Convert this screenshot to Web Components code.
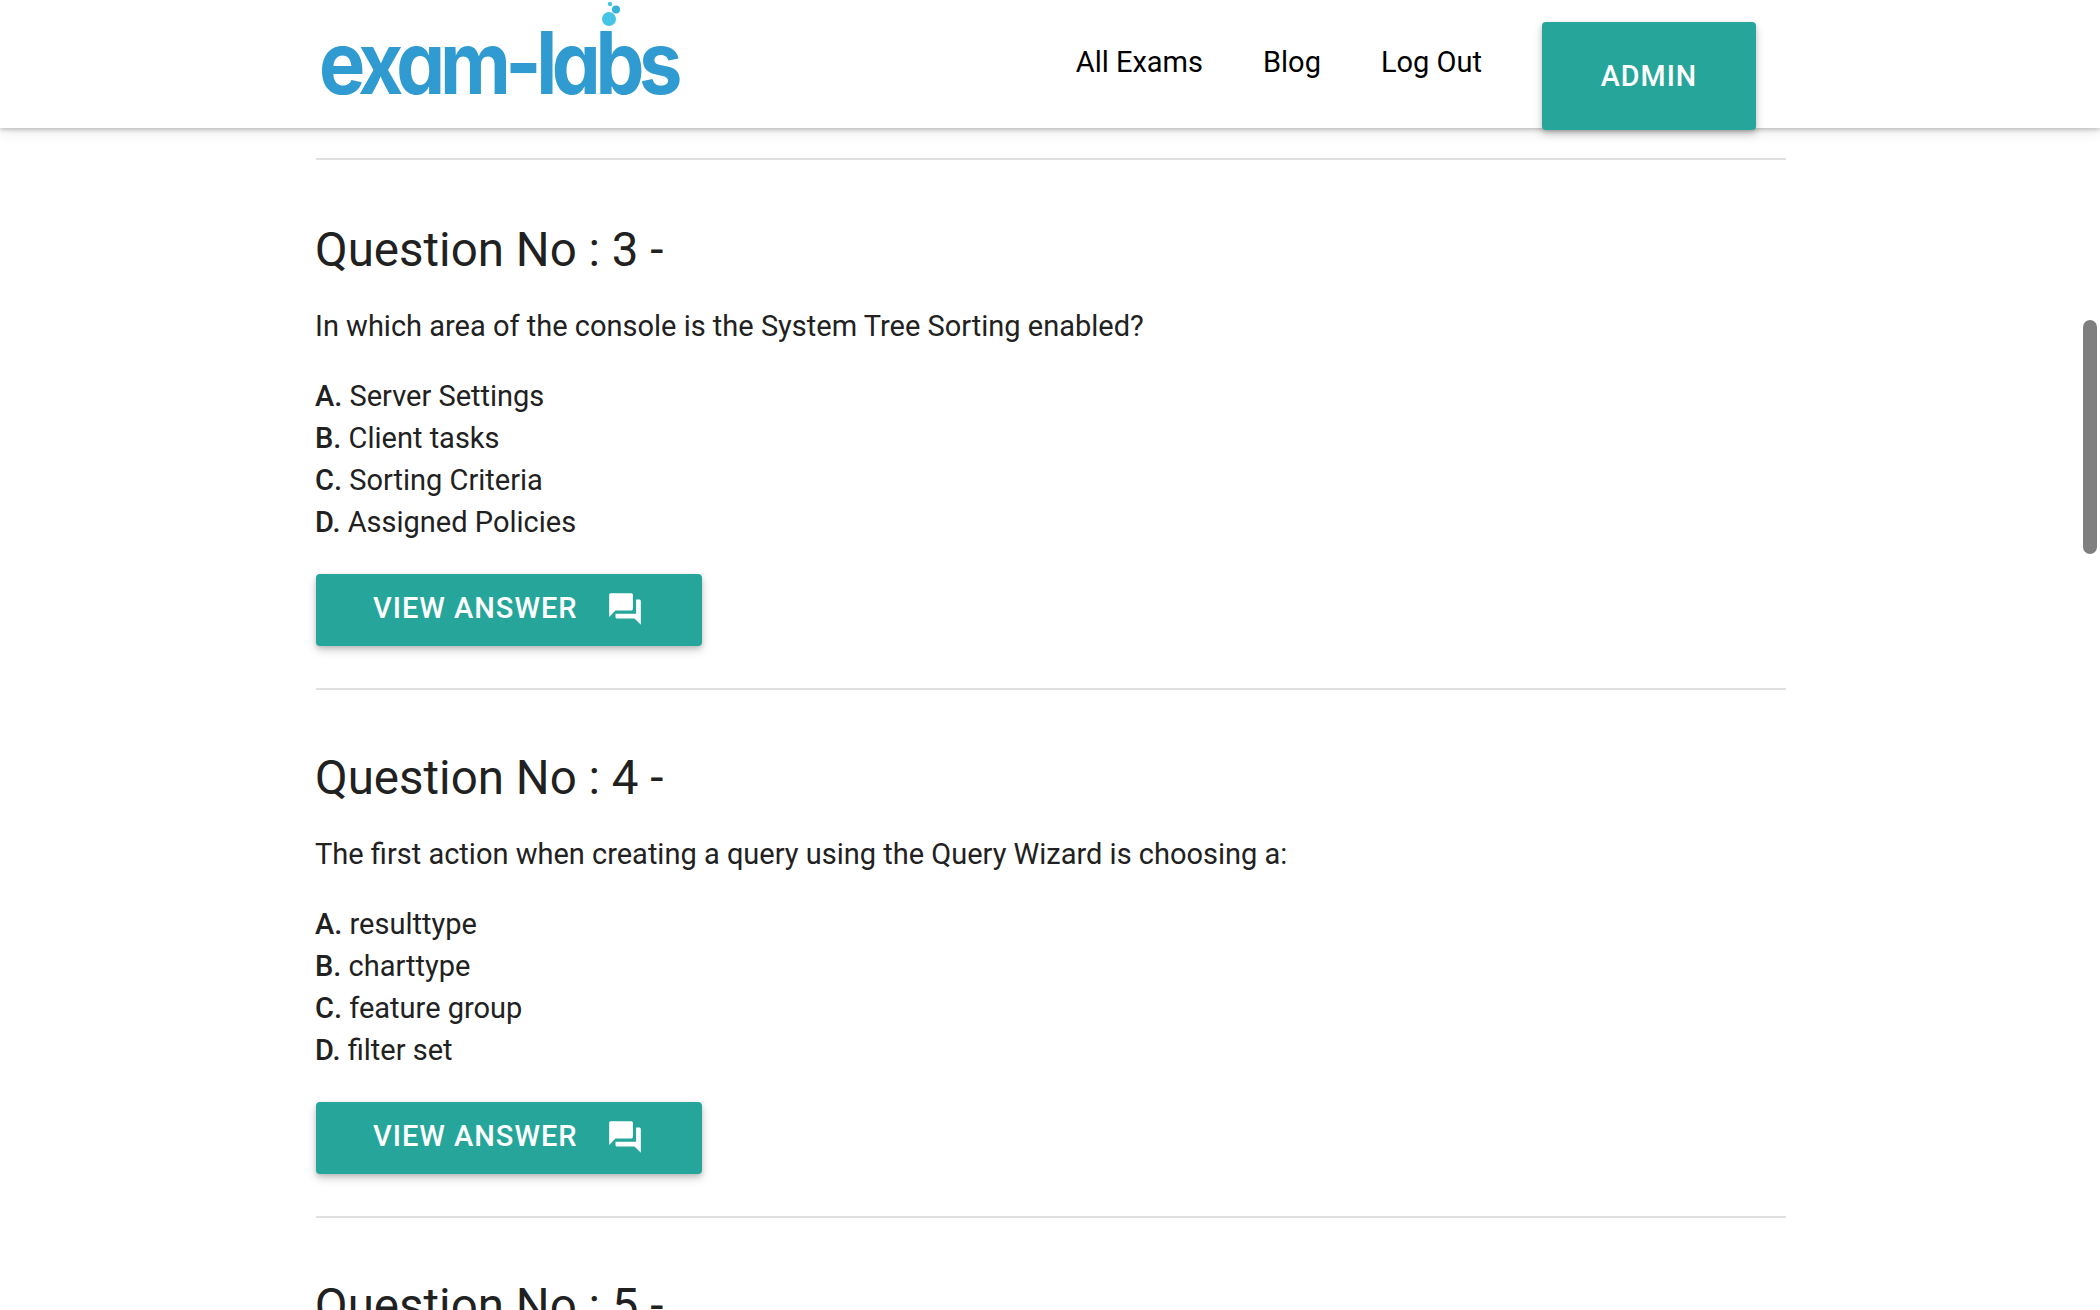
<!DOCTYPE html>
<html lang="en">
<head>
<meta charset="utf-8">
<title>Exam Labs</title>
<style>
html,body{margin:0;padding:0;height:1310px;overflow:hidden;background:#fff}
body{font-family:Roboto,"Liberation Sans",sans-serif;color:#212121}
</style>
</head>
<body>
<template id="t-logo">
<style>
:host{display:block;width:380px;height:128px}
svg{display:block;width:380px;height:128px;overflow:visible}
text{font-family:Inter,"Liberation Sans",sans-serif;font-weight:700;font-size:86px;letter-spacing:-6px;fill:#2f9bd0;font-feature-settings:"cv11" 1;filter:blur(.5px)}
</style>
<svg viewBox="0 0 380 128" role="img" aria-label="exam-labs">
<text x="0" y="94" textLength="358" lengthAdjust="spacingAndGlyphs">exam-labs</text>
<circle cx="290" cy="19" r="7" fill="#45c4e6"/>
<circle cx="297" cy="9.5" r="4" fill="#35b2d8"/>
<circle cx="291" cy="4" r="2.2" fill="#45c4e6"/>
</svg>
</template>

<template id="t-header">
<style>
:host{display:flex;height:128px;background:#fff;box-shadow:0 2px 4px rgba(0,0,0,.2),0 3px 14px rgba(0,0,0,.1);position:relative;z-index:2;padding-left:319px;box-sizing:border-box}
nav{display:flex;margin-left:auto;margin-right:344px;align-items:flex-start}
::slotted(nav-link){margin-right:60px}
</style>
<slot name="logo"></slot>
<nav><slot></slot></nav>
</template>

<template id="t-navlink">
<style>
:host{display:block;font-size:29px;line-height:42px;color:#000;padding-top:41px;white-space:nowrap}
</style>
<slot></slot>
</template>

<template id="t-btn">
<style>
:host{display:inline-flex;align-items:center;justify-content:var(--btn-justify,center);padding-left:var(--btn-pad,0);background:#26a69a;color:#fff;border-radius:4px;box-sizing:border-box;font-size:var(--btn-font,29px);letter-spacing:1px;text-transform:uppercase;font-weight:500;box-shadow:0 4px 10px rgba(0,0,0,.2),0 2px 4px rgba(0,0,0,.12);white-space:nowrap}
</style>
<slot></slot>
</template>

<template id="t-question">
<style>
:host{display:block;border-top:2px solid #e0e0e0;padding:58px 0 0;box-sizing:border-box;height:528px}
:host(:first-child){padding-top:60px;height:530px}
h5{font-size:47.5px;font-weight:400;line-height:60px;margin:0 0 0 -1px;color:#212121}
p{font-size:29px;line-height:42px;margin:25px 0 28px -1px;color:#212121}
.opts{display:block;margin:0 0 31px -1px}
exam-button{width:386px;height:72px;--btn-justify:flex-start;--btn-pad:57px}
.lbl{display:block;margin-bottom:5px}
svg{width:38px;height:38px;fill:#fff;margin:0 0 2px 28px;display:block;flex:none}
</style>
<h5><slot name="title"></slot></h5>
<p><slot name="text"></slot></p>
<div class="opts"><slot></slot></div>
<exam-button><span class="lbl">View Answer</span><svg viewBox="0 0 24 24"><path d="M21 6h-2v9H6v2c0 .55.45 1 1 1h11l4 4V7c0-.55-.45-1-1-1zm-4 6V3c0-.55-.45-1-1-1H3c-.55 0-1 .45-1 1v14l4-4h10c.55 0 1-.45 1-1z"/></svg></exam-button>
</template>

<template id="t-option">
<style>
:host{display:block;font-size:29px;line-height:42px;color:#212121}
b{font-weight:500}
</style>
<b><slot name="key"></slot></b> <slot></slot>
</template>

<template id="t-main">
<style>
:host{display:block;margin:30px 0 0 316px;width:1470px}
</style>
<slot></slot>
</template>

<template id="t-thumb">
<style>
:host{display:block;position:fixed;left:2083px;top:320px;width:14px;height:234px;border-radius:7px;background:#7f7f7f;z-index:3}
</style>
</template>

<exam-header>
  <exam-logo slot="logo"></exam-logo>
  <nav-link>All Exams</nav-link>
  <nav-link>Blog</nav-link>
  <nav-link>Log Out</nav-link>
  <exam-button style="width:214px;height:108px;margin-top:22px;--btn-font:28.7px">Admin</exam-button>
</exam-header>

<exam-main>
  <exam-question>
    <span slot="title">Question No : 3 -</span>
    <span slot="text">In which area of the console is the System Tree Sorting enabled?</span>
    <exam-option><span slot="key">A.</span>Server Settings</exam-option>
    <exam-option><span slot="key">B.</span>Client tasks</exam-option>
    <exam-option><span slot="key">C.</span>Sorting Criteria</exam-option>
    <exam-option><span slot="key">D.</span>Assigned Policies</exam-option>
  </exam-question>
  <exam-question>
    <span slot="title">Question No : 4 -</span>
    <span slot="text">The first action when creating a query using the Query Wizard is choosing a:</span>
    <exam-option><span slot="key">A.</span>resulttype</exam-option>
    <exam-option><span slot="key">B.</span>charttype</exam-option>
    <exam-option><span slot="key">C.</span>feature group</exam-option>
    <exam-option><span slot="key">D.</span>filter set</exam-option>
  </exam-question>
  <exam-question>
    <span slot="title">Question No : 5 -</span>
  </exam-question>
</exam-main>
<scroll-thumb></scroll-thumb>

<script>
const defs={
 'exam-logo':'t-logo','exam-header':'t-header','nav-link':'t-navlink','exam-button':'t-btn',
 'exam-question':'t-question','exam-option':'t-option','exam-main':'t-main','scroll-thumb':'t-thumb'
};
for(const [name,id] of Object.entries(defs)){
  customElements.define(name,class extends HTMLElement{
    constructor(){
      super();
      this.attachShadow({mode:'open'}).appendChild(document.getElementById(id).content.cloneNode(true));
    }
  });
}
</script>
</body>
</html>
